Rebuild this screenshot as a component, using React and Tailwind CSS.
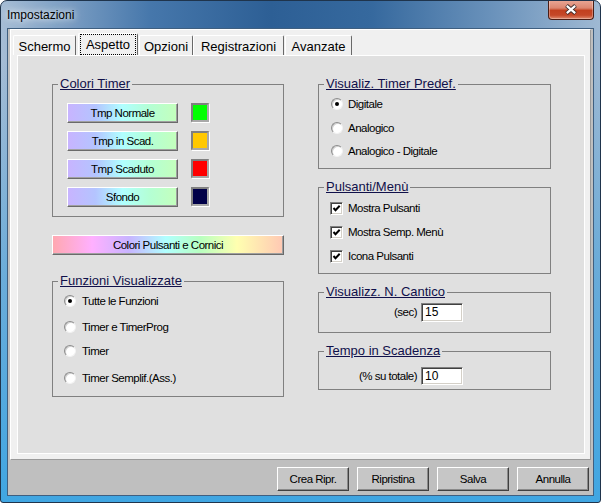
import React from 'react';

const small = 'text-[11.5px] leading-[13px] tracking-[-0.5px] text-black';

const TABS = [
  { label: 'Schermo', cls: 'w-[63px]' },
  { label: 'Aspetto', cls: 'w-[60px] ml-[2px]', active: true },
  { label: 'Opzioni', cls: 'w-[54px] ml-[1px]' },
  { label: 'Registrazioni', cls: 'w-[91px]' },
  { label: 'Avanzate', cls: 'w-[67px] ml-[1px]' },
];

const TIMER_COLORS = [
  { label: 'Tmp Normale', swatch: 'bg-[#00ff00]' },
  { label: 'Tmp in Scad.', swatch: 'bg-[#ffc800]' },
  { label: 'Tmp Scaduto', swatch: 'bg-[#ff0000]' },
  { label: 'Sfondo', swatch: 'bg-[#000048]' },
];

const FUNZIONI = [
  { label: 'Tutte le Funzioni', mt: 'mt-[7px]', checked: true },
  { label: 'Timer e TimerProg', mt: 'mt-[14px]' },
  { label: 'Timer', mt: 'mt-[12px]' },
  { label: 'Timer Semplif.(Ass.)', mt: 'mt-[15px]' },
];

const VISUALIZ = [
  { label: 'Digitale', mt: 'mt-[7px]', checked: true },
  { label: 'Analogico', mt: 'mt-[12px]' },
  { label: 'Analogico - Digitale', mt: 'mt-[11px]' },
];

const PULSANTI = [
  { label: 'Mostra Pulsanti', mt: 'mt-[8px]' },
  { label: 'Mostra Semp. Menù', mt: 'mt-[11px]' },
  { label: 'Icona Pulsanti', mt: 'mt-[11px]' },
];

function Tab({ label, cls, active }) {
  if (active) {
    return (
      <div className={`${cls} h-[22px] flex bg-[#f0f0f0] border-t border-l border-white border-r border-r-[#696969] rounded-t-[2px] px-[1px]`}>
        <div className="flex-1 border border-dotted border-black flex justify-center pt-[2px] text-[13px] leading-[15px] text-black">
          {label}
        </div>
      </div>
    );
  }
  return (
    <div className={`${cls} h-[20px] flex justify-center bg-[#f0f0f0] border-t border-l border-white border-r border-r-[#696969] rounded-t-[2px] pt-[3px] text-[13px] leading-[15px] text-black`}>
      {label}
    </div>
  );
}

function GroupBox({ title, className, children }) {
  return (
    <div className={`border border-[#808080] flex flex-col ${className}`}>
      <div className="-mt-[9px] ml-[5px] flex">
        <span className="bg-[#e0e0e0] px-[2px] text-[13px] leading-[15px] text-[#10104a] underline">
          {title}
        </span>
      </div>
      {children}
    </div>
  );
}

function Radio({ checked }) {
  return (
    <span className="w-[12px] h-[12px] shrink-0 rounded-full bg-white border border-t-[#8c8c8c] border-l-[#8c8c8c] border-r-[#f2f2f2] border-b-[#f2f2f2] shadow-[inset_1px_1px_0_#d0d0d0] flex items-center justify-center">
      {checked && <span className="w-[4px] h-[4px] rounded-full bg-black" />}
    </span>
  );
}

function Checkbox() {
  return (
    <span className="w-[13px] h-[13px] shrink-0 bg-white border border-t-[#808080] border-l-[#808080] border-r-white border-b-white shadow-[inset_1px_1px_0_#404040,inset_-1px_-1px_0_#d4d0c8] flex items-center justify-center">
      <svg width="11" height="11" viewBox="0 0 11 11">
        <path d="M2.5 5 L4.5 7.2 L8.7 2.8" fill="none" stroke="#000" strokeWidth="2" />
      </svg>
    </span>
  );
}

function SunkenInput({ value, h }) {
  return (
    <div className={`ml-[4px] w-[42px] ${h} bg-white border border-t-[#808080] border-l-[#808080] border-r-white border-b-white shadow-[inset_1px_1px_0_#404040,inset_-1px_-1px_0_#d4d0c8] flex items-center pl-[3px] text-[12px] leading-[13px] text-black`}>
      {value}
    </div>
  );
}

function WinButton({ label }) {
  return (
    <button className={`w-[72px] h-[24px] bg-[#c6c6c6] border-t border-l border-white border-b border-r border-b-[#404040] border-r-[#404040] shadow-[inset_-1px_-1px_0_#8a8a8a] flex items-center justify-center ${small}`}>
      {label}
    </button>
  );
}

export default function App() {
  return (
    <div className="w-[601px] h-[503px] flex flex-col border border-[#1f344c] rounded-t-[7px] rounded-b-[3px] overflow-hidden font-['Liberation_Sans',Arial,sans-serif] bg-[linear-gradient(to_bottom,rgba(60,160,222,0)_0%,rgba(60,160,222,0)_12%,rgba(60,160,222,0.55)_55%,rgba(64,166,226,1)_100%),linear-gradient(to_right,#a6bdd5_0%,#86a6c8_8%,#4677ab_25%,#2d5f95_45%,#36699e_62%,#6a92bb_82%,#9fb9d3_100%)]">
      {/* barra del titolo */}
      <div className="h-[27px] shrink-0 flex items-center pl-[6px]">
        <span className="text-[12px] leading-[14px] text-black [text-shadow:0_0_6px_#fff,0_0_12px_rgba(255,255,255,0.7)]">
          Impostazioni
        </span>
        <div className="ml-auto self-start -mt-px mr-[6px] w-[46px] h-[20px] rounded-b-[4px] border border-t-0 border-[#4a1d14] bg-[linear-gradient(to_bottom,#eaa897_0%,#dc8670_42%,#c2401f_55%,#c54828_80%,#e08a6e_100%)] shadow-[inset_0_0_0_1px_rgba(255,255,255,0.3)] flex items-center justify-center">
          <svg width="14" height="11" viewBox="0 0 14 11">
            <path d="M2.5 1.5 L11.5 9.5 M11.5 1.5 L2.5 9.5" stroke="#3a2a2a" strokeWidth="4" />
            <path d="M2.8 1.8 L11.2 9.2 M11.2 1.8 L2.8 9.2" stroke="#ffffff" strokeWidth="2.2" />
          </svg>
        </div>
      </div>

      {/* area client */}
      <div className="mx-[6px] mb-[6px] h-[468px] border border-[#3f5f80] bg-[#bfbfbf] flex flex-col">
        <div className="ml-[2px] w-[581px] h-[431px] shrink-0 bg-[#f0f0f0] border-t border-l border-white border-r border-b border-r-[#9a9a9a] border-b-[#9a9a9a] flex flex-col">
          <div className="h-[25px] shrink-0 flex items-end pl-[2px]">
            {TABS.map((t) => (
              <Tab key={t.label} {...t} />
            ))}
          </div>

          <div className="ml-[6px] w-[568px] h-[399px] bg-[#e0e0e0] border border-white flex pl-[34px] pt-[28px] gap-[34px]">
            {/* colonna sinistra */}
            <div className="w-[232px] flex flex-col">
              <GroupBox title="Colori Timer" className="h-[133px]">
                <div className="mt-[12px] ml-[14px] flex flex-col gap-[8px]">
                  {TIMER_COLORS.map((c) => (
                    <div key={c.label} className="flex items-start">
                      <button className={`w-[111px] h-[20px] border-t border-l border-white border-b border-r border-b-[#6a6a6a] border-r-[#6a6a6a] shadow-[inset_-1px_-1px_0_#a0a0a0] bg-[linear-gradient(to_right,#c8b4ff_0%,#b4c4ff_25%,#b0ffff_50%,#b4ffd4_75%,#c4ffbc_100%)] flex items-center justify-center ${small}`}>
                        {c.label}
                      </button>
                      <span className={`ml-[13px] w-[18px] h-[19px] border-2 border-t-[#7f7f7f] border-l-[#7f7f7f] border-r-[#a8a8a8] border-b-[#a8a8a8] shadow-[1px_1px_0_#ffffff] ${c.swatch}`} />
                    </div>
                  ))}
                </div>
              </GroupBox>

              <button className={`mt-[18px] w-[232px] h-[20px] border-t border-l border-white border-b border-r border-b-[#6a6a6a] border-r-[#6a6a6a] shadow-[inset_-1px_-1px_0_#a0a0a0] bg-[linear-gradient(to_right,#ffa8b0_0%,#ffb0ff_17%,#c8b4ff_33%,#b0ffff_49%,#b8ffc0_64%,#ffffb0_80%,#ffc8b4_100%)] flex items-center justify-center ${small}`}>
                Colori Pulsanti e Cornici
              </button>

              <GroupBox title="Funzioni Visualizzate" className="mt-[26px] h-[116px]">
                <div className="flex flex-col pl-[11px]">
                  {FUNZIONI.map((r) => (
                    <div key={r.label} className={`${r.mt} h-[12px] flex items-center`}>
                      <Radio checked={r.checked} />
                      <span className={`ml-[6px] ${small}`}>{r.label}</span>
                    </div>
                  ))}
                </div>
              </GroupBox>
            </div>

            {/* colonna destra */}
            <div className="w-[233px] flex flex-col">
              <GroupBox title="Visualiz. Timer Predef." className="h-[85px]">
                <div className="flex flex-col pl-[12px]">
                  {VISUALIZ.map((r) => (
                    <div key={r.label} className={`${r.mt} h-[12px] flex items-center`}>
                      <Radio checked={r.checked} />
                      <span className={`ml-[5px] ${small}`}>{r.label}</span>
                    </div>
                  ))}
                </div>
              </GroupBox>

              <GroupBox title="Pulsanti/Menù" className="mt-[18px] h-[87px]">
                <div className="flex flex-col pl-[11px]">
                  {PULSANTI.map((r) => (
                    <div key={r.label} className={`${r.mt} h-[13px] flex items-center`}>
                      <Checkbox />
                      <span className={`ml-[5px] ${small}`}>{r.label}</span>
                    </div>
                  ))}
                </div>
              </GroupBox>

              <GroupBox title="Visualizz. N. Cantico" className="mt-[18px] h-[41px]">
                <div className="mt-[4px] flex items-center">
                  <span className={`w-[98px] text-right ${small}`}>(sec)</span>
                  <SunkenInput value="15" h="h-[19px]" />
                </div>
              </GroupBox>

              <GroupBox title="Tempo in Scadenza" className="mt-[18px] h-[39px]">
                <div className="mt-[9px] flex items-center">
                  <span className={`w-[98px] text-right ${small}`}>(% su totale)</span>
                  <SunkenInput value="10" h="h-[18px]" />
                </div>
              </GroupBox>
            </div>
          </div>
        </div>

        {/* pulsanti in basso */}
        <div className="flex-1 flex justify-end items-start pt-[7px] pr-[4px] gap-[8px]">
          <WinButton label="Crea Ripr." />
          <WinButton label="Ripristina" />
          <WinButton label="Salva" />
          <WinButton label="Annulla" />
        </div>
      </div>
    </div>
  );
}
